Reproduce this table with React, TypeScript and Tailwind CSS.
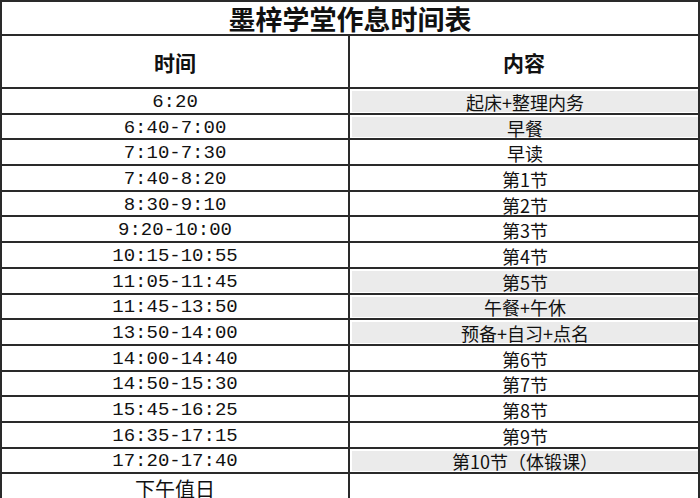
import React from "react";

const rows: { t: string; c: string; s?: boolean }[] = [
  { t: "6:20", c: "起床+整理内务", s: true },
  { t: "6:40-7:00", c: "早餐", s: true },
  { t: "7:10-7:30", c: "早读" },
  { t: "7:40-8:20", c: "第1节" },
  { t: "8:30-9:10", c: "第2节" },
  { t: "9:20-10:00", c: "第3节" },
  { t: "10:15-10:55", c: "第4节" },
  { t: "11:05-11:45", c: "第5节", s: true },
  { t: "11:45-13:50", c: "午餐+午休", s: true },
  { t: "13:50-14:00", c: "预备+自习+点名", s: true },
  { t: "14:00-14:40", c: "第6节" },
  { t: "14:50-15:30", c: "第7节" },
  { t: "15:45-16:25", c: "第8节" },
  { t: "16:35-17:15", c: "第9节" },
  { t: "17:20-17:40", c: "第10节（体锻课）", s: true },
  { t: "下午值日", c: "" },
];

const cjk = { fontFamily: '"Noto Sans CJK SC", "Noto Sans", sans-serif' };
const mono = { fontFamily: '"Liberation Mono", "Noto Sans CJK SC", monospace' };

export default function App() {
  return (
    <div className="w-[700px] h-[498px] overflow-hidden bg-white text-[#111]">
      <div className="border-t-2 border-l-2 border-r-2 border-[#2a2a2a]">
        <div
          className="h-[34px] flex items-center justify-center border-b-2 border-[#2a2a2a] text-[27px] font-bold leading-none tracking-[0px]"
          style={cjk}
        >
          墨梓学堂作息时间表
        </div>
        <div className="flex h-[53px] border-b-2 border-[#2a2a2a] text-[21px] font-bold" style={cjk}>
          <div className="w-[348px] border-r-2 border-[#2a2a2a] flex items-center justify-center pt-[2px]">时间</div>
          <div className="flex-1 flex items-center justify-center pt-[2px]">内容</div>
        </div>
        {rows.map((r, i) => {
          const isCjk = r.t.includes("值");
          return (
            <div key={i} className="flex h-[25.7px] border-b-2 border-[#2a2a2a]">
              <div
                className={
                  "w-[348px] border-r-2 border-[#2a2a2a] flex items-center justify-center leading-none " +
                  (isCjk ? "text-[20px] pt-[6px]" : "text-[19px] pt-[3px]")
                }
                style={isCjk ? cjk : mono}
              >
                {r.t}
              </div>
              <div className="flex-1 flex pl-[2px] pt-[2px] pb-[1px]">
                <div
                  className={
                    "flex-1 flex items-center justify-center text-[18px] leading-none pt-[1px] " +
                    (r.s ? "bg-[#ebebeb]" : "")
                  }
                  style={cjk}
                >
                  {r.c}
                </div>
              </div>
            </div>
          );
        })}
      </div>
    </div>
  );
}
